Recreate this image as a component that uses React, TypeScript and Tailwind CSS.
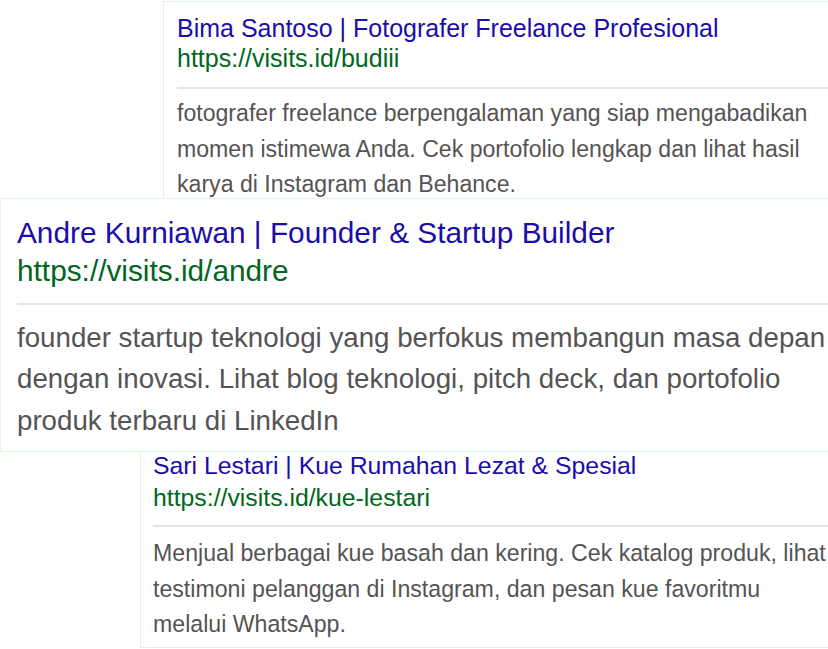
import React from "react";

interface ResultCardProps {
  title: string;
  url: string;
  lines: string[];
  cardClass: string;
  titleClass: string;
  urlClass: string;
  dividerClass: string;
  descClass: string;
}

const ResultCard = (props: ResultCardProps) => {
  const { title, url, lines, cardClass, titleClass, urlClass, dividerClass, descClass } = props;

  return (
    <div className={`bg-white border border-r-0 border-[#def5de] w-[900px] ${cardClass}`}>
      <p className={`text-[#1a0dab] whitespace-nowrap ${titleClass}`}>{title}</p>
      <p className={`text-[#006621] whitespace-nowrap ${urlClass}`}>{url}</p>
      <div className={`h-[2px] bg-[#e4e4e4] ${dividerClass}`} />
      <div className={`text-[#545454] ${descClass}`}>
        {lines.map((line, id) => (
          <p key={id} className="whitespace-nowrap">
            {line}
          </p>
        ))}
      </div>
    </div>
  );
};

export default function App() {
  return (
    <div className="w-[828px] h-[649px] overflow-hidden bg-white font-['Liberation_Sans',Arial,sans-serif]">
      <ResultCard
        title="Bima Santoso | Fotografer Freelance Profesional"
        url="https://visits.id/budiii"
        lines={[
          "fotografer freelance berpengalaman yang siap mengabadikan",
          "momen istimewa Anda. Cek portofolio lengkap dan lihat hasil",
          "karya di Instagram dan Behance.",
        ]}
        cardClass="ml-[163px] mt-[1px] pl-[13px] pt-[11px] pb-[3px]"
        titleClass="text-[25px] leading-[30px]"
        urlClass="text-[25px] leading-[30px]"
        dividerClass="mt-[14px]"
        descClass="mt-[7px] text-[23.1px] leading-[35.5px]"
      />
      <ResultCard
        title="Andre Kurniawan | Founder & Startup Builder"
        url="https://visits.id/andre"
        lines={[
          "founder startup teknologi yang berfokus membangun masa depan",
          "dengan inovasi. Lihat blog teknologi, pitch deck, dan portofolio",
          "produk terbaru di LinkedIn",
        ]}
        cardClass="relative z-10 -mt-[9px] pl-[16px] pt-[15px] pb-[10px]"
        titleClass="text-[29.8px] leading-[38px]"
        urlClass="text-[29.8px] leading-[38px]"
        dividerClass="mt-[13px]"
        descClass="mt-[12px] text-[27.7px] leading-[41.5px]"
      />
      <ResultCard
        title="Sari Lestari | Kue Rumahan Lezat & Spesial"
        url="https://visits.id/kue-lestari"
        lines={[
          "Menjual berbagai kue basah dan kering. Cek katalog produk, lihat",
          "testimoni pelanggan di Instagram, dan pesan kue favoritmu",
          "melalui WhatsApp.",
        ]}
        cardClass="ml-[140px] -mt-[14px] pl-[12px] pt-[11px] pb-[4px]"
        titleClass="text-[24.8px] leading-[32px]"
        urlClass="text-[24.8px] leading-[32px]"
        dividerClass="mt-[11px]"
        descClass="mt-[9px] text-[23.15px] leading-[35.5px]"
      />
    </div>
  );
}
